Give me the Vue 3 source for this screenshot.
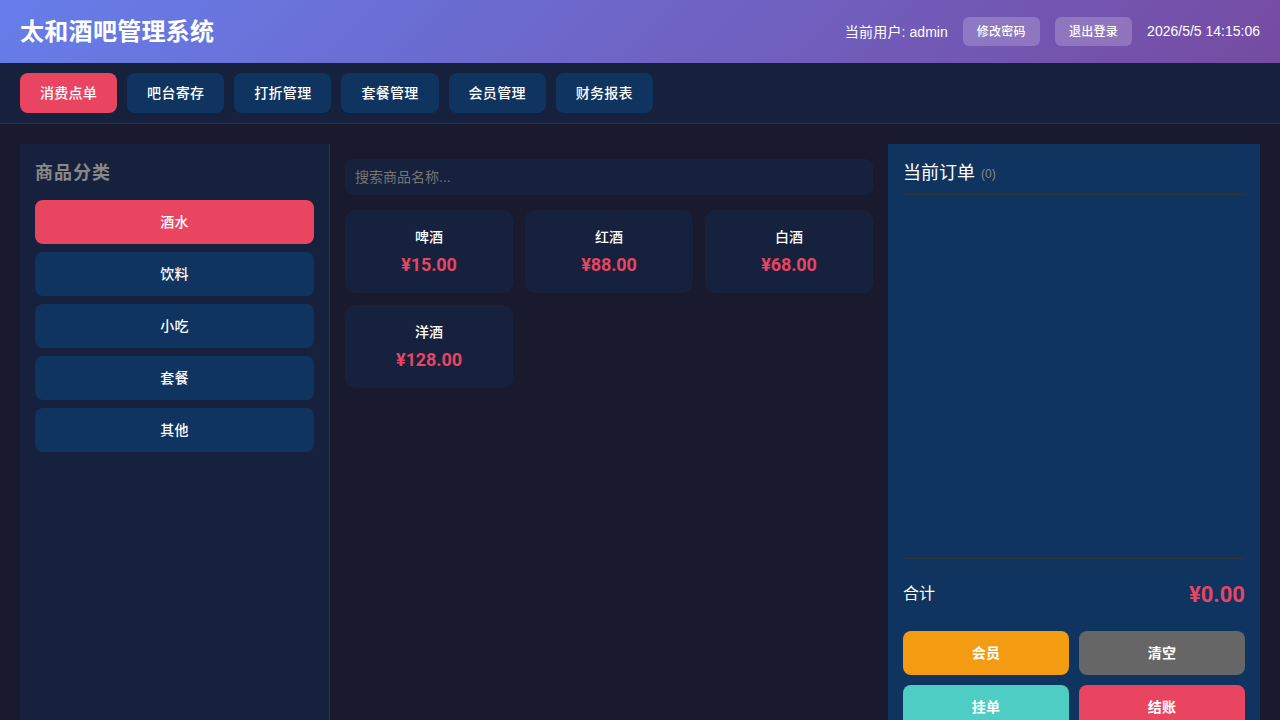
<script setup>
const navItems = ['消费点单', '吧台寄存', '打折管理', '套餐管理', '会员管理', '财务报表']
const categories = ['酒水', '饮料', '小吃', '套餐', '其他']
const products = [
  { name: '啤酒', price: '¥15.00' },
  { name: '红酒', price: '¥88.00' },
  { name: '白酒', price: '¥68.00' },
  { name: '洋酒', price: '¥128.00' }
]
</script>

<template>
  <div class="app">
    <header class="header">
      <h1 class="title">太和酒吧管理系统</h1>
      <div class="user">
        <span class="user-text"><span class="user-label">当前用户:</span> admin</span>
        <button class="head-btn">修改密码</button>
        <button class="head-btn">退出登录</button>
        <span class="user-text">2026/5/5 14:15:06</span>
      </div>
    </header>
    <nav class="nav">
      <button v-for="(n, i) in navItems" :key="n" class="nav-btn" :class="{ active: i === 0 }">{{ n }}</button>
    </nav>
    <main class="main">
      <aside class="side">
        <h3 class="side-title">商品分类</h3>
        <div class="cats">
          <button v-for="(c, i) in categories" :key="c" class="cat" :class="{ active: i === 0 }">{{ c }}</button>
        </div>
      </aside>
      <section class="center">
        <input class="search" placeholder="搜索商品名称..." />
        <div class="grid">
          <div v-for="p in products" :key="p.name" class="card">
            <div class="name">{{ p.name }}</div>
            <div class="price">{{ p.price }}</div>
          </div>
        </div>
      </section>
      <aside class="order">
        <div class="order-head">
          <span class="order-title">当前订单</span>
          <span class="count">(0)</span>
        </div>
        <div class="order-list"></div>
        <div class="total">
          <span class="total-label">合计</span>
          <span class="total-val">¥0.00</span>
        </div>
        <div class="actions">
          <button class="act orange">会员</button>
          <button class="act grey">清空</button>
          <button class="act teal">挂单</button>
          <button class="act red">结账</button>
        </div>
      </aside>
    </main>
  </div>
</template>

<style scoped>
.app {
  height: 720px;
  overflow: hidden;
  background: #1a1a2e;
  color: #fff;
  font-family: "Liberation Sans", "Noto Sans CJK SC", sans-serif;
}
button {
  font-family: inherit;
  color: #fff;
  border: none;
  cursor: pointer;
  letter-spacing: 0.3px;
}
.header {
  height: 63px;
  box-sizing: border-box;
  padding: 0 20px;
  display: flex;
  align-items: center;
  justify-content: space-between;
  background: linear-gradient(135deg, #667eea 0%, #764ba2 100%);
}
.title {
  margin: 0;
  padding-bottom: 4px;
  font-size: 24px;
  font-weight: 700;
  letter-spacing: 0.3px;
}
.user {
  display: flex;
  align-items: center;
  gap: 15px;
  font-size: 14px;
}
.user-text {
  padding-bottom: 2px;
}
.user-label {
  letter-spacing: 0.2px;
}
.head-btn {
  padding: 2px 14px 0;
  height: 29px;
  font-size: 12px;
  line-height: 15px;
  font-weight: 500;
  background: rgba(255, 255, 255, 0.2);
  border-radius: 6px;
}
.nav {
  height: 61px;
  box-sizing: border-box;
  padding: 10px 20px;
  display: flex;
  gap: 10px;
  background: #16213e;
  border-bottom: 1px solid #333;
}
.nav-btn {
  width: 97.15px;
  padding: 0 0 2px;
  height: 40px;
  font-size: 14px;
  font-weight: 500;
  background: #0f3460;
  border-radius: 8px;
}
.nav-btn.active,
.cat.active {
  background: #e94560;
}
.main {
  padding: 20px;
  display: grid;
  grid-template-columns: 310px 1fr 372px;
  height: 640px;
  box-sizing: content-box;
}
.side {
  box-sizing: border-box;
  padding: 15px;
  background: #16213e;
  border-right: 1px solid #333;
}
.side-title {
  margin: 0 0 15px;
  height: 26px;
  line-height: 28px;
  font-size: 18px;
  font-weight: 700;
  letter-spacing: 1px;
  color: #888;
}
.cats {
  display: flex;
  flex-direction: column;
  gap: 8px;
}
.cat {
  height: 44px;
  padding: 0 0 2px;
  font-size: 14px;
  font-weight: 500;
  background: #0f3460;
  border-radius: 8px;
}
.center {
  padding: 15px;
  min-width: 0;
}
.search {
  display: block;
  width: 100%;
  height: 36px;
  box-sizing: border-box;
  padding: 0 10px;
  border: none;
  outline: none;
  border-radius: 8px;
  background: #16213e;
  color: #fff;
  font-family: inherit;
  font-size: 14px;
}
.search::placeholder {
  color: #757575;
  opacity: 1;
}
.grid {
  margin-top: 15px;
  display: grid;
  grid-template-columns: repeat(3, 1fr);
  gap: 12px;
}
.card {
  height: 83px;
  box-sizing: border-box;
  padding-top: 17px;
  background: #16213e;
  border-radius: 10px;
  text-align: center;
}
.name {
  font-size: 14px;
  font-weight: 500;
  line-height: 20px;
}
.price {
  margin-top: 7px;
  font-family: Roboto, "Liberation Sans", sans-serif;
  font-size: 18px;
  font-weight: 700;
  line-height: 22px;
  letter-spacing: -0.1px;
  color: #e94560;
}
.order {
  box-sizing: border-box;
  padding: 15px;
  height: 600px;
  background: #0f3460;
  display: flex;
  flex-direction: column;
}
.order-head {
  height: 36px;
  box-sizing: border-box;
  border-bottom: 1px solid #333;
  line-height: 28px;
}
.order-title {
  font-size: 18px;
}
.count {
  margin-left: 6px;
  font-size: 12px;
  color: #888;
  vertical-align: 1px;
}
.order-list {
  flex: 1;
  border-bottom: 1px solid #333;
}
.total {
  display: flex;
  justify-content: space-between;
  align-items: center;
  height: 72px;
  box-sizing: border-box;
  padding-bottom: 2px;
}
.total-label {
  font-size: 16px;
  margin-top: -4px;
}
.total-val {
  font-family: Roboto, "Liberation Sans", sans-serif;
  font-size: 22px;
  font-weight: 700;
  color: #e94560;
}
.actions {
  display: grid;
  grid-template-columns: 1fr 1fr;
  gap: 10px;
}
.act {
  height: 44px;
  padding: 0 0 2px;
  font-size: 14px;
  font-weight: 700;
  border-radius: 8px;
}
.orange { background: #f39c12; }
.grey { background: #666; }
.teal { background: #4ecdc4; }
.red { background: #e94560; }
</style>
